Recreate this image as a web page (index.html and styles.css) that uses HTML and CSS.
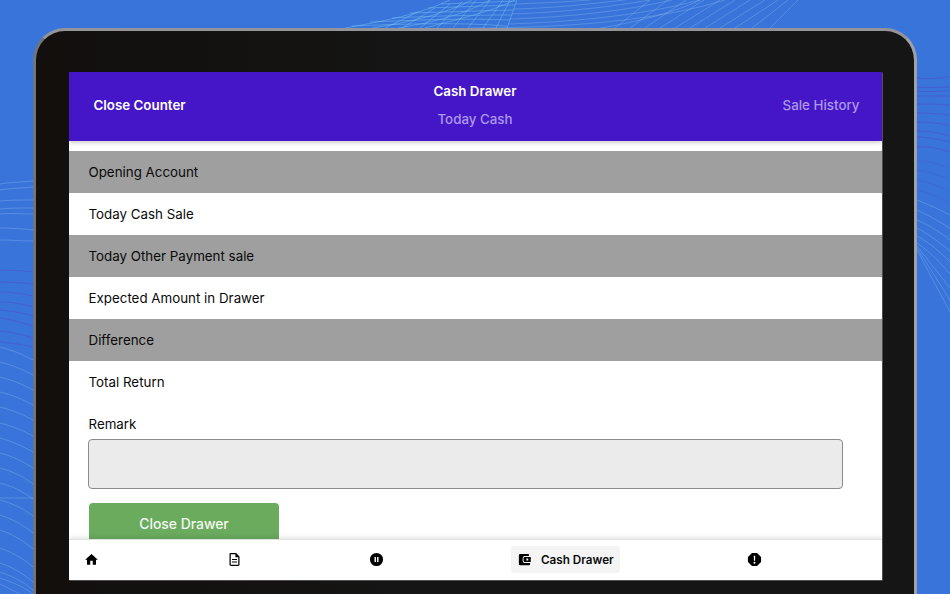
FILE: index.html
```html
<!DOCTYPE html>
<html lang="en">
<head>
<meta charset="utf-8">
<title>Cash Drawer</title>
<link rel="stylesheet" href="styles.css">
</head>
<body>
<svg class="backdrop" viewBox="0 0 950 594" aria-hidden="true">
  <path class="mesh-bright" d="M345 28C385 21 420 14 450 0M372 28C410 22 445 14 472 0M398 28C435 22 465 14 490 0M425 28C455 20 490 12 515 0M352 26C400 24 460 22 507 26M370 22C415 20 470 18 510 20M392 18C430 16 475 15 511 15M410 13C440 12 480 11 513 10M428 8C455 7 485 6 515 5M441 4C465 3 490 2 516 1M385 28L418 12M402 28L435 8M420 28L450 4M437 28L462 2M453 28L476 0M468 28L490 0M483 28L503 0M496 28L510 0M507 28L517 0"/>
  <path class="mesh-soft" d="M508 24C570 22 640 16 700 0M510 19C570 17 625 11 672 0M512 14C565 12 610 7 650 0M514 9C555 8 590 4 625 0M516 4C540 3 565 2 590 0M470 28C570 28 660 20 725 0M600 28C640 22 680 10 700 0M615 28L650 0M630 28L668 0M645 28L686 0M660 28L704 0M675 28L720 0M690 28L735 0M705 28L750 0M720 28L765 0M735 28L778 0M752 28L788 0M770 28L798 0"/>
  <path class="mesh-soft" d="M0 184C12 182 24 182 33 181M0 190C12 188 24 188 33 187M0 201C12 200 24 200 33 200M0 209C12 208 24 208 33 208M0 214C12 213 24 214 33 214M0 228C12 228 24 229 33 230M0 240C12 240 24 241 33 241"/>
  <path class="wave" d="M0 270C12 270 24 271 33 272M0 282C12 282 24 283 33 284M0 292C12 292 24 294 33 296M0 302C12 302 24 304 33 307M0 310C12 311 24 313 33 316M0 318C12 320 24 323 33 326M0 331C12 332 24 335 33 338M0 342C12 343 24 345 33 347"/>
  <path class="mesh-soft" d="M0 347C12 350 24 355 33 360M0 362C12 365 24 370 33 375M0 377C12 380 24 385 33 390M0 392C12 395 24 400 33 405M0 407C12 410 24 415 33 420M0 423C12 426 24 431 33 436M0 438C12 441 24 447 33 452M0 453C12 456 24 462 33 468M0 468C12 471 24 477 33 484M0 483C12 486 24 492 33 499M0 498C12 498 24 498 33 498M0 500C12 503 24 509 33 516M0 515C12 519 24 525 33 533M0 530C12 534 24 541 33 549M0 548C12 552 24 559 33 567M0 563C12 567 24 574 33 582M0 572C12 576 24 582 33 590M0 578C12 582 24 587 33 594M0 584L20 594"/>
  <path class="wave" d="M917 78C930 79 940 78 950 77M917 87C930 88 940 87 950 87M917 91C930 92 940 91 950 91M917 96C930 96 940 96 950 96M917 104C930 104 940 104 950 105M917 113C930 113 940 114 950 115M917 122C930 122 940 124 950 125M917 131C930 131 940 133 950 136M917 137C930 137 940 140 950 142M917 147C930 146 940 149 950 152"/>
  <path class="wave-faint" d="M917 160C930 161 940 165 950 168M917 170C930 172 940 176 950 180M917 180C930 182 940 187 950 192M917 190C930 193 940 198 950 204"/>
  <path class="mesh-soft" d="M917 200C930 205 940 210 950 215M917 210C930 216 940 222 950 228M917 220C930 226 940 232 950 240M917 228C930 235 940 243 950 251M917 236C930 243 940 252 950 262M917 243C930 252 940 262 950 274M917 246L950 288M917 248L950 300M917 250L950 312"/>
</svg>
<div class="device">
  <main class="screen">
    <header class="topbar">
      <span class="topbar-action">Close Counter</span>
      <div class="topbar-title">
        <strong>Cash Drawer</strong>
        <span>Today Cash</span>
      </div>
      <span class="topbar-link">Sale History</span>
    </header>
    <div class="content">
      <div class="row row-grey">Opening Account</div>
      <div class="row">Today Cash Sale</div>
      <div class="row row-grey">Today Other Payment sale</div>
      <div class="row">Expected Amount in Drawer</div>
      <div class="row row-grey">Difference</div>
      <div class="row">Total Return</div>
      <label class="remark-label" for="remark">Remark</label>
      <textarea class="remark" id="remark"></textarea>
      <button class="close-button" type="button">Close Drawer</button>
    </div>
    <nav class="tabbar">
      <span class="tab tab-home">
        <svg viewBox="0 0 24 24"><path d="M10 20.500v-6.400h4v6.400h5.200v-8.200h3L12 3 1.800 12.300h3v8.200z"/></svg>
      </span>
      <span class="tab tab-doc">
        <svg viewBox="0 0 24 24"><path class="outline" d="M6 2.500h8l5 5v12.300a1.700 1.700 0 0 1-1.700 1.700H6.700A1.700 1.700 0 0 1 5 19.800V3.500a1 1 0 0 1 1-1z"/><path d="M13.500 2.500h1L19 7v1.200h-5.500zM8 11h8v1.800H8zM8 15h8v1.800H8z"/></svg>
      </span>
      <span class="tab tab-pause">
        <svg viewBox="0 0 24 24"><path fill-rule="evenodd" d="M12 1.500a10.500 10.500 0 1 0 0 21 10.500 10.500 0 0 0 0-21zM8.800 8h2.300v8H8.800zm4.100 0h2.300v8h-2.300z"/></svg>
      </span>
      <span class="tab tab-active">
        <svg viewBox="0 0 24 24"><path fill-rule="evenodd" d="M3 5a2 2 0 0 1 2-2h14v3.500h-6.500A3.500 3.500 0 0 0 9 10v4a3.500 3.500 0 0 0 3.500 3.500H21V19a2 2 0 0 1-2 2H5a2 2 0 0 1-2-2z"/><path fill-rule="evenodd" d="M12.500 8H22v8h-9.500a2 2 0 0 1-2-2v-4a2 2 0 0 1 2-2zm2.500 2.500v3h3v-3z"/></svg>
        <span class="tab-label">Cash Drawer</span>
      </span>
      <span class="tab tab-alert">
        <svg viewBox="0 0 24 24"><path fill-rule="evenodd" d="M8 1.500h8L22.500 8v8L16 22.500H8L1.500 16V8zM10.800 6l.3 8h1.800l.3-8zM12 15.500a1.600 1.600 0 1 0 0 3.200 1.600 1.600 0 0 0 0-3.200z"/></svg>
      </span>
    </nav>
  </main>
</div>
</body>
</html>
```
FILE: styles.css
```css
* {
  box-sizing: border-box;
}

html,
body {
  height: 594px;
  margin: 0;
  overflow: hidden;
}

body {
  background: #3874d9;
  font-family: Inter, "Liberation Sans", sans-serif;
  padding: 28px 33px 0;
}

.backdrop {
  position: absolute;
  top: 0;
  left: 0;
  width: 950px;
  height: 594px;
}

.backdrop path {
  fill: none;
  stroke-width: 0.7;
}

.mesh-bright {
  stroke: rgba(125, 205, 250, 0.6);
}

.mesh-soft {
  stroke: rgba(165, 205, 250, 0.42);
}

.wave {
  stroke: rgba(95, 60, 205, 0.6);
}

.wave-faint {
  stroke: rgba(95, 60, 205, 0.25);
}

.device {
  position: relative;
  width: 884px;
  height: 566px;
  overflow: hidden;
  padding: 41px 32.5px 0;
  background: linear-gradient(90deg, #120f0d, #151515 45%);
  border-style: solid;
  border-width: 3px 3px 0;
  border-color: #93959a #9ea1a5 #000 #6f747d;
  border-radius: 32px 32px 0 0;
}

.screen {
  display: flex;
  flex-direction: column;
  width: 813px;
  height: 508px;
  background: #fff;
  box-shadow: 0.5px 0.5px 0 #8a8a8a;
  overflow: hidden;
}

.topbar {
  display: grid;
  flex: none;
  grid-template-columns: 1fr auto 1fr;
  align-items: center;
  height: 69px;
  padding: 0 22px 4px;
  background: #4416c8;
  color: #fff;
  box-shadow: 0 2px 4px rgba(0, 0, 0, 0.18);
  font-size: 13.35px;
}

.topbar-action {
  margin-left: 3px;
  font-weight: 600;
}

.topbar-title {
  display: flex;
  flex-direction: column;
  gap: 12px;
  align-items: center;
}

.topbar-title strong {
  font-weight: 600;
}

.topbar-title span,
.topbar-link {
  color: #ae98ea;
  font-weight: 500;
}

.topbar-link {
  justify-self: end;
}

.content {
  flex: 1;
  min-height: 0;
  padding-top: 10px;
  overflow: hidden;
}

.row {
  display: flex;
  align-items: center;
  height: 42px;
  padding-left: 20px;
  color: #0a0a0a;
  font-size: 13.35px;
}

.row-grey {
  background: #9f9f9f;
}

.remark-label {
  display: block;
  padding: 13px 0 0 20px;
  color: #0a0a0a;
  font-size: 13.35px;
  line-height: 16px;
}

.remark {
  display: block;
  width: 755px;
  height: 50px;
  margin: 7px 0 14px 19.5px;
  background: #ebebeb;
  border: 1px solid #8c8c8c;
  border-radius: 4px;
  resize: none;
}

.close-button {
  display: block;
  width: 190px;
  height: 44px;
  margin-left: 20.5px;
  padding: 0 0 3px;
  background: #6aab5e;
  border: 0;
  border-radius: 4px;
  color: #f4f8f2;
  font: 500 13.9px Inter, "Liberation Sans", sans-serif;
}

.tabbar {
  position: relative;
  flex: none;
  height: 41px;
  background: #fff;
  border-top: 1px solid #e2e2e2;
  box-shadow: 0 -2px 4px rgba(0, 0, 0, 0.1);
}

.tab {
  position: absolute;
  top: 5.5px;
  display: flex;
  align-items: center;
  height: 27px;
  color: #0a0a0a;
}

.tab svg {
  display: block;
  width: 15px;
  height: 15px;
  fill: #000;
}

.tab-home {
  left: 15.5px;
}

.tab-doc {
  left: 158px;
}

.tab-pause {
  left: 300px;
}

.tab-active {
  left: 442.500px;
  gap: 9px;
  width: 108.5px;
  padding-left: 6px;
  background: #f4f4f4;
  border-radius: 3px;
  font-size: 11.7px;
  font-weight: 600;
}

.tab-label {
  padding-top: 2px;
}

.tab-alert {
  left: 678px;
}

.outline {
  fill: #fff;
  stroke: #000;
  stroke-width: 2;
}
```
